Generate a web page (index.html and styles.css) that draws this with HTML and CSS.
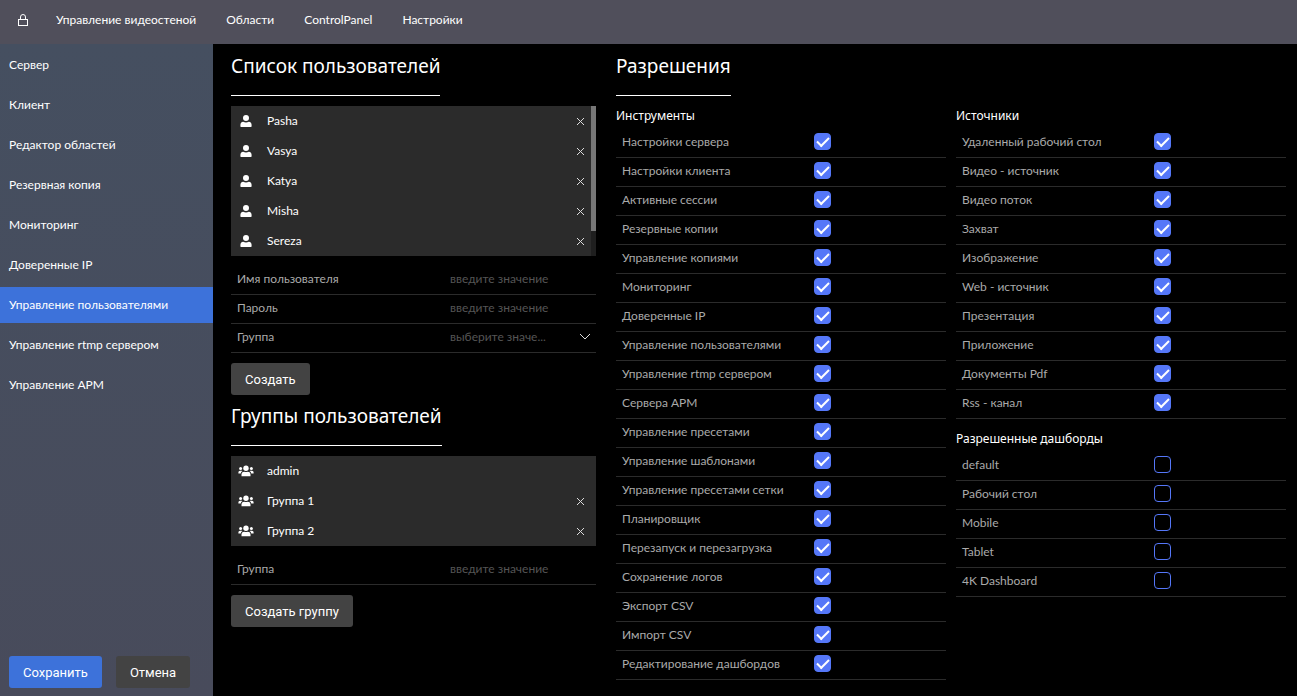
FILE: index.html
```html
<!DOCTYPE html>
<html lang="ru">
<head>
    <meta charset="UTF-8">
    <meta name="viewport" content="width=device-width, initial-scale=1.0">
    <title>Управление пользователями</title>
    <link rel="stylesheet" href="styles.css">
</head>
<body>
    <svg class="sprite" aria-hidden="true">
        <symbol id="icon-user" viewBox="0 0 12 12">
            <circle cx="6" cy="3" r="3"/>
            <path d="M1 12q-.6 0-.6-.8V10Q.4 7 3.2 6.700Q6 8.200 8.800 6.700Q11.600 7 11.600 10v1.200q0 .8-.6.8z"/>
        </symbol>
        <symbol id="icon-group" viewBox="0 0 16 12">
            <circle cx="8" cy="3.200" r="2.700"/>
            <circle cx="2.600" cy="3.600" r="1.500"/>
            <circle cx="13.400" cy="3.600" r="1.500"/>
            <path d="M3.500 11.200V9.500q0-2.600 2.700-2.800q1.800.8 3.600 0q2.700.2 2.700 2.800v1.700z"/>
            <path d="M.4 8.600V7.200Q.4 5.700 2 5.700h1.400q.7 0 1.100.4Q3 7 2.700 8.600z"/>
            <path d="M15.600 8.600V7.200q0-1.500-1.600-1.500h-1.400q-.7 0-1.100.4Q13 7 13.300 8.600z"/>
        </symbol>
        <symbol id="icon-close" viewBox="0 0 9 9">
            <path d="M1 1l7 7M8 1l-7 7"/>
        </symbol>
    </svg>

    <header class="header">
        <svg class="lock-icon" viewBox="0 0 12 14" aria-hidden="true">
            <rect x="1.500" y="6.500" width="9" height="6"/>
            <path d="M3.500 6.500V4Q3.500 1.500 6 1.500T8.500 4V6.500"/>
        </svg>
        <nav class="top-menu">
            <a href="#">Управление видеостеной</a>
            <a href="#">Области</a>
            <a href="#">ControlPanel</a>
            <a href="#">Настройки</a>
        </nav>
    </header>

    <div class="container">
        <aside class="sidebar">
            <nav class="side-menu">
                <a href="#">Сервер</a>
                <a href="#">Клиент</a>
                <a href="#">Редактор областей</a>
                <a href="#">Резервная копия</a>
                <a href="#">Мониторинг</a>
                <a href="#">Доверенные IP</a>
                <a href="#" class="active">Управление пользователями</a>
                <a href="#">Управление rtmp сервером</a>
                <a href="#">Управление АРМ</a>
            </nav>
            <div class="sidebar-actions">
                <button type="button" class="btn btn-primary">Сохранить</button>
                <button type="button" class="btn">Отмена</button>
            </div>
        </aside>

        <main class="content">
            <section class="users">
                <h2 class="title">Список пользователей</h2>
                <div class="list-wrap">
                    <ul class="list">
                        <li><svg class="list-icon"><use href="#icon-user"/></svg><span>Pasha</span><button type="button" class="remove" aria-label="Удалить"><svg><use href="#icon-close"/></svg></button></li>
                        <li><svg class="list-icon"><use href="#icon-user"/></svg><span>Vasya</span><button type="button" class="remove" aria-label="Удалить"><svg><use href="#icon-close"/></svg></button></li>
                        <li><svg class="list-icon"><use href="#icon-user"/></svg><span>Katya</span><button type="button" class="remove" aria-label="Удалить"><svg><use href="#icon-close"/></svg></button></li>
                        <li><svg class="list-icon"><use href="#icon-user"/></svg><span>Misha</span><button type="button" class="remove" aria-label="Удалить"><svg><use href="#icon-close"/></svg></button></li>
                        <li><svg class="list-icon"><use href="#icon-user"/></svg><span>Sereza</span><button type="button" class="remove" aria-label="Удалить"><svg><use href="#icon-close"/></svg></button></li>
                    </ul>
                    <div class="scrollbar"><div class="scrollbar-thumb"></div></div>
                </div>
                <form class="form">
                    <div class="row">
                        <label for="userName">Имя пользователя</label>
                        <input type="text" id="userName" placeholder="введите значение">
                    </div>
                    <div class="row">
                        <label for="userPassword">Пароль</label>
                        <input type="password" id="userPassword" placeholder="введите значение">
                    </div>
                    <div class="row">
                        <label for="userGroup">Группа</label>
                        <div class="select">
                            <select id="userGroup">
                                <option>выберите значе...</option>
                            </select>
                            <svg class="select-arrow" viewBox="0 0 12 8" aria-hidden="true"><path d="M1 1l5 5l5-5"/></svg>
                        </div>
                    </div>
                    <button type="button" class="btn">Создать</button>
                </form>

                <h2 class="title">Группы пользователей</h2>
                <ul class="list">
                    <li><svg class="list-icon"><use href="#icon-group"/></svg><span>admin</span></li>
                    <li><svg class="list-icon"><use href="#icon-group"/></svg><span>Группа 1</span><button type="button" class="remove" aria-label="Удалить"><svg><use href="#icon-close"/></svg></button></li>
                    <li><svg class="list-icon"><use href="#icon-group"/></svg><span>Группа 2</span><button type="button" class="remove" aria-label="Удалить"><svg><use href="#icon-close"/></svg></button></li>
                </ul>
                <form class="form">
                    <div class="row">
                        <label for="groupName">Группа</label>
                        <input type="text" id="groupName" placeholder="введите значение">
                    </div>
                    <button type="button" class="btn">Создать группу</button>
                </form>
            </section>

            <section class="permissions">
                <h2 class="title">Разрешения</h2>
                <div class="permissions-grid">
                    <div class="column">
                        <fieldset>
                            <legend>Инструменты</legend>
                            <label class="row"><span>Настройки сервера</span><input type="checkbox" checked></label>
                            <label class="row"><span>Настройки клиента</span><input type="checkbox" checked></label>
                            <label class="row"><span>Активные сессии</span><input type="checkbox" checked></label>
                            <label class="row"><span>Резервные копии</span><input type="checkbox" checked></label>
                            <label class="row"><span>Управление копиями</span><input type="checkbox" checked></label>
                            <label class="row"><span>Мониторинг</span><input type="checkbox" checked></label>
                            <label class="row"><span>Доверенные IP</span><input type="checkbox" checked></label>
                            <label class="row"><span>Управление пользователями</span><input type="checkbox" checked></label>
                            <label class="row"><span>Управление rtmp сервером</span><input type="checkbox" checked></label>
                            <label class="row"><span>Сервера АРМ</span><input type="checkbox" checked></label>
                            <label class="row"><span>Управление пресетами</span><input type="checkbox" checked></label>
                            <label class="row"><span>Управление шаблонами</span><input type="checkbox" checked></label>
                            <label class="row"><span>Управление пресетами сетки</span><input type="checkbox" checked></label>
                            <label class="row"><span>Планировщик</span><input type="checkbox" checked></label>
                            <label class="row"><span>Перезапуск и перезагрузка</span><input type="checkbox" checked></label>
                            <label class="row"><span>Сохранение логов</span><input type="checkbox" checked></label>
                            <label class="row"><span>Экспорт CSV</span><input type="checkbox" checked></label>
                            <label class="row"><span>Импорт CSV</span><input type="checkbox" checked></label>
                            <label class="row"><span>Редактирование дашбордов</span><input type="checkbox" checked></label>
                        </fieldset>
                    </div>
                    <div class="column">
                        <fieldset>
                            <legend>Источники</legend>
                            <label class="row"><span>Удаленный рабочий стол</span><input type="checkbox" checked></label>
                            <label class="row"><span>Видео - источник</span><input type="checkbox" checked></label>
                            <label class="row"><span>Видео поток</span><input type="checkbox" checked></label>
                            <label class="row"><span>Захват</span><input type="checkbox" checked></label>
                            <label class="row"><span>Изображение</span><input type="checkbox" checked></label>
                            <label class="row"><span>Web - источник</span><input type="checkbox" checked></label>
                            <label class="row"><span>Презентация</span><input type="checkbox" checked></label>
                            <label class="row"><span>Приложение</span><input type="checkbox" checked></label>
                            <label class="row"><span>Документы Pdf</span><input type="checkbox" checked></label>
                            <label class="row"><span>Rss - канал</span><input type="checkbox" checked></label>
                        </fieldset>
                        <fieldset>
                            <legend>Разрешенные дашборды</legend>
                            <label class="row"><span>default</span><input type="checkbox"></label>
                            <label class="row"><span>Рабочий стол</span><input type="checkbox"></label>
                            <label class="row"><span>Mobile</span><input type="checkbox"></label>
                            <label class="row"><span>Tablet</span><input type="checkbox"></label>
                            <label class="row"><span>4K Dashboard</span><input type="checkbox"></label>
                        </fieldset>
                    </div>
                </div>
            </section>
        </main>
    </div>
</body>
</html>
```
FILE: styles.css
```css
* {
    margin: 0;
    padding: 0;
    box-sizing: border-box;
}

body {
    font-family: 'Segoe UI', Lato, sans-serif;
    font-size: 12px;
    line-height: 20px;
    min-height: 100vh;
    display: flex;
    flex-direction: column;
    background: #000;
    color: #fff;
}

a {
    color: inherit;
    text-decoration: none;
}

ul {
    list-style: none;
}

.sprite {
    display: none;
}

/* верхнее меню */
.header {
    height: 44px;
    padding: 0 17px 4px;
    display: flex;
    align-items: center;
    gap: 27px;
    background: #504f5b;
}

.lock-icon {
    width: 12px;
    height: 14px;
    fill: none;
    stroke: #fff;
}

.top-menu {
    display: flex;
    gap: 30px;
}

.container {
    flex: 1;
    display: flex;
}

/* боковое меню */
.sidebar {
    width: 213px;
    flex-shrink: 0;
    display: flex;
    flex-direction: column;
    justify-content: space-between;
    background: linear-gradient(#454f60, #484b5b);
}

.side-menu {
    display: flex;
    flex-direction: column;
    gap: 4px;
    padding-top: 3px;
}

.side-menu a {
    padding: 8px 9px;
}

.side-menu a.active {
    background: #3d72da;
}

.sidebar-actions {
    display: flex;
    gap: 14px;
    padding: 8px 9px;
}

.btn {
    height: 32px;
    padding: 0 14px;
    border: none;
    border-radius: 3px;
    background: #434343;
    color: #fff;
    font-family: Roboto, sans-serif;
    font-size: 13px;
    cursor: pointer;
}

.btn-primary {
    background: #3d72da;
}

/* содержимое */
.content {
    flex: 1;
    display: grid;
    grid-template-columns: 73fr 134fr;
    gap: 20px;
    padding: 1px 11px 10px 18px;
}

.title {
    width: fit-content;
    margin-bottom: 10px;
    padding: 7px 0 15px;
    border-bottom: 1px solid #fff;
    font-family: 'Segoe UI', 'Noto Sans', sans-serif;
    font-size: 19px;
    line-height: 28px;
    font-weight: 400;
}

.list-wrap {
    position: relative;
}

.scrollbar {
    position: absolute;
    top: 0;
    right: 0;
    bottom: 0;
    width: 5px;
    background: #1f1f1f;
}

.scrollbar-thumb {
    height: 83%;
    background: #777;
}

.list {
    background: #2b2b2b;
}

.list li {
    height: 30px;
    display: flex;
    align-items: center;
    gap: 13px;
    padding: 0 11px 0 7px;
}

.list-icon {
    width: 16px;
    height: 12px;
    fill: #fff;
}

.remove {
    display: flex;
    margin-left: auto;
    border: none;
    background: none;
    cursor: pointer;
}

.remove svg {
    width: 9px;
    height: 9px;
    stroke: #ddd;
}

.form {
    padding-top: 10px;
}

.form .btn {
    margin-top: 10px;
}

.row {
    height: 29px;
    padding-bottom: 3px;
    display: grid;
    grid-template-columns: 60% 40%;
    align-items: center;
    border-bottom: 1px solid #2b2b2b;
    color: #aaa;
}

.row > label,
.row > span {
    padding-left: 6px;
}

.row input:not([type="checkbox"]),
.row select {
    width: 100%;
    border: none;
    outline: none;
    background: none;
    font: inherit;
    color: #555;
}

.row input::placeholder {
    color: #555;
}

.row select {
    appearance: none;
}

.select {
    display: flex;
    align-items: center;
}

.select-arrow {
    width: 12px;
    height: 8px;
    flex-shrink: 0;
    margin-right: 5px;
    fill: none;
    stroke: #ddd;
}

/* разрешения */
.permissions-grid {
    display: grid;
    grid-template-columns: 1fr 1fr;
    gap: 10px;
}

.column {
    display: flex;
    flex-direction: column;
    gap: 10px;
}

fieldset {
    border: none;
    min-width: 0;
}

legend {
    padding-bottom: 3px;
    font-family: 'Segoe UI', 'Noto Sans', sans-serif;
}

input[type="checkbox"] {
    appearance: none;
    width: 17px;
    height: 17px;
    display: grid;
    place-items: center;
    border: 1px solid #5577f8;
    border-radius: 4px;
}

input[type="checkbox"]:checked {
    background: #5577f8;
}

input[type="checkbox"]:checked::before {
    content: '';
    width: 10px;
    height: 5px;
    margin-bottom: 3px;
    border: solid #fff;
    border-width: 0 0 2px 2px;
    transform: rotate(-45deg);
}
```
